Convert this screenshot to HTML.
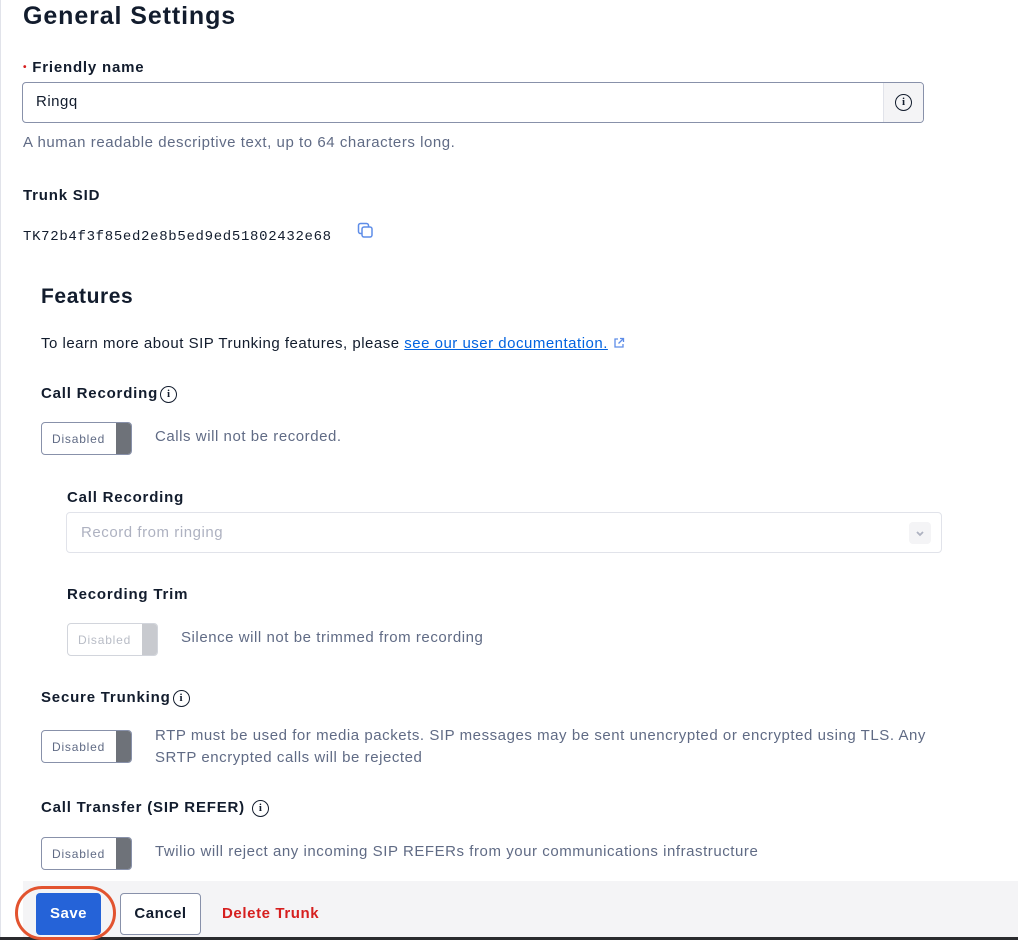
<!DOCTYPE html>
<html><head><meta charset="utf-8"><style>
*{margin:0;padding:0;box-sizing:border-box}
body{width:1018px;height:940px;background:#fff;font-family:"Liberation Sans",Arial,sans-serif;color:#121c2d;position:relative;overflow:hidden}
.a{position:absolute;white-space:nowrap}
.lbl{font-size:15px;font-weight:bold;color:#121c2d;letter-spacing:.8px}
.txt{font-size:15px;color:#606b85;letter-spacing:.55px}
.info{display:inline-block;width:17px;height:17px;border:1.6px solid #121c2d;border-radius:50%;font-size:11px;font-weight:bold;text-align:center;line-height:14px;vertical-align:1px;margin-left:2px;font-family:"Liberation Serif",serif;letter-spacing:0}
.tg{position:absolute;width:91px;height:33px;border:1px solid #8891aa;border-radius:4px;overflow:hidden;background:#fff}
.tg span{position:absolute;left:10px;top:9px;font-size:12px;color:#606b85;letter-spacing:.8px}
.tg i{position:absolute;right:0;top:0;width:15px;height:100%;background:#6e7279}
.tg.l{border-color:#d2d5dc}.tg.l span{color:#b8bcc6}.tg.l i{background:#c8cacf}
</style></head><body>
<div class="a" style="left:0;top:0;width:1px;height:940px;background:#e1e3ea"></div>
<div class="a" style="left:23px;top:2px;font-size:25px;font-weight:bold;letter-spacing:.9px">General Settings</div>
<div class="a lbl" style="left:23px;top:59px"><span style="color:#d61f1f;font-size:10px;vertical-align:2px">•</span> Friendly name</div>
<div class="a" style="left:22px;top:82px;width:902px;height:41px;border:1px solid #8891aa;border-radius:4px;overflow:hidden">
 <div class="a" style="left:13px;top:10px;font-size:15px;color:#121c2d;letter-spacing:.5px">Ringq</div>
 <div class="a" style="right:0;top:0;width:40px;height:39px;background:#f4f4f6;border-left:1px solid #e1e3ea"><span class="info" style="position:absolute;left:11px;top:11px;margin:0">i</span></div>
</div>
<div class="a txt" style="left:23px;top:134px">A human readable descriptive text, up to 64 characters long.</div>
<div class="a lbl" style="left:23px;top:187px">Trunk SID</div>
<div class="a" style="left:23px;top:229px;font-family:'Liberation Mono',monospace;font-size:14px;color:#121c2d;letter-spacing:.68px">TK72b4f3f85ed2e8b5ed9ed51802432e68</div>
<svg class="a" style="left:357px;top:222px" width="18" height="18" viewBox="0 0 18 18"><rect x="1.5" y="1.5" width="10" height="10" rx="2" fill="none" stroke="#5e8de8" stroke-width="1.5"/><rect x="5" y="5" width="10" height="10" rx="2" fill="#fff" stroke="#5e8de8" stroke-width="1.5"/></svg>
<div class="a" style="left:41px;top:285px;font-size:21px;font-weight:bold;letter-spacing:.6px">Features</div>
<div class="a" style="left:41px;top:335px;font-size:15px;color:#121c2d;letter-spacing:.5px">To learn more about SIP Trunking features, please <span style="color:#0263e0;text-decoration:underline">see our user documentation.</span> <svg width="12" height="12" viewBox="0 0 12 12" style="vertical-align:-1px"><path d="M5 2H2v8h8V7M7 1.5h3.5V5M10.5 1.5L5.5 6.5" fill="none" stroke="#5e8de8" stroke-width="1.3"/></svg></div>
<div class="a lbl" style="left:41px;top:385px">Call Recording<span class="info">i</span></div>
<div class="tg" style="left:41px;top:422px"><span>Disabled</span><i></i></div>
<div class="a txt" style="left:155px;top:428px">Calls will not be recorded.</div>
<div class="a lbl" style="left:67px;top:489px">Call Recording</div>
<div class="a" style="left:66px;top:512px;width:876px;height:41px;border:1px solid #e1e3ea;border-radius:4px">
 <div class="a txt" style="left:14px;top:11px;color:#aeb2c1">Record from ringing</div>
 <div class="a" style="right:10px;top:9px;width:22px;height:22px;background:#f4f4f6;border-radius:4px"><svg width="22" height="22" viewBox="0 0 22 22"><path d="M8 10l3 3 3-3" fill="none" stroke="#aeb2c1" stroke-width="1.8"/></svg></div>
</div>
<div class="a lbl" style="left:67px;top:586px">Recording Trim</div>
<div class="tg l" style="left:67px;top:623px"><span>Disabled</span><i></i></div>
<div class="a txt" style="left:181px;top:629px">Silence will not be trimmed from recording</div>
<div class="a lbl" style="left:41px;top:689px">Secure Trunking<span class="info">i</span></div>
<div class="tg" style="left:41px;top:730px"><span>Disabled</span><i></i></div>
<div class="a txt" style="left:155px;top:725px;line-height:22px">RTP must be used for media packets. SIP messages may be sent unencrypted or encrypted using TLS. Any<br>SRTP encrypted calls will be rejected</div>
<div class="a lbl" style="left:41px;top:799px">Call Transfer (SIP REFER) <span class="info">i</span></div>
<div class="tg" style="left:41px;top:837px"><span>Disabled</span><i></i></div>
<div class="a txt" style="left:155px;top:843px">Twilio will reject any incoming SIP REFERs from your communications infrastructure</div>
<div class="a" style="left:23px;top:881px;width:995px;height:56px;background:#f4f4f6"></div>
<div class="a" style="left:0;top:937px;width:1018px;height:3px;background:#2a2b2e"></div>
<div class="a" style="left:36px;top:893px;width:65px;height:42px;background:#2563d8;border-radius:4px;color:#fff;font-size:15px;font-weight:bold;text-align:center;line-height:42px;letter-spacing:.5px">Save</div>
<div class="a" style="left:15px;top:886px;width:101px;height:54px;border:3px solid #e2532f;border-radius:27px"></div>
<div class="a" style="left:120px;top:893px;width:81px;height:42px;background:#fff;border:1px solid #8891aa;border-radius:4px;font-size:15px;font-weight:bold;text-align:center;line-height:40px;letter-spacing:.5px">Cancel</div>
<div class="a" style="left:222px;top:905px;font-size:15px;font-weight:bold;color:#d61f1f;letter-spacing:.6px">Delete Trunk</div>
</body></html>
